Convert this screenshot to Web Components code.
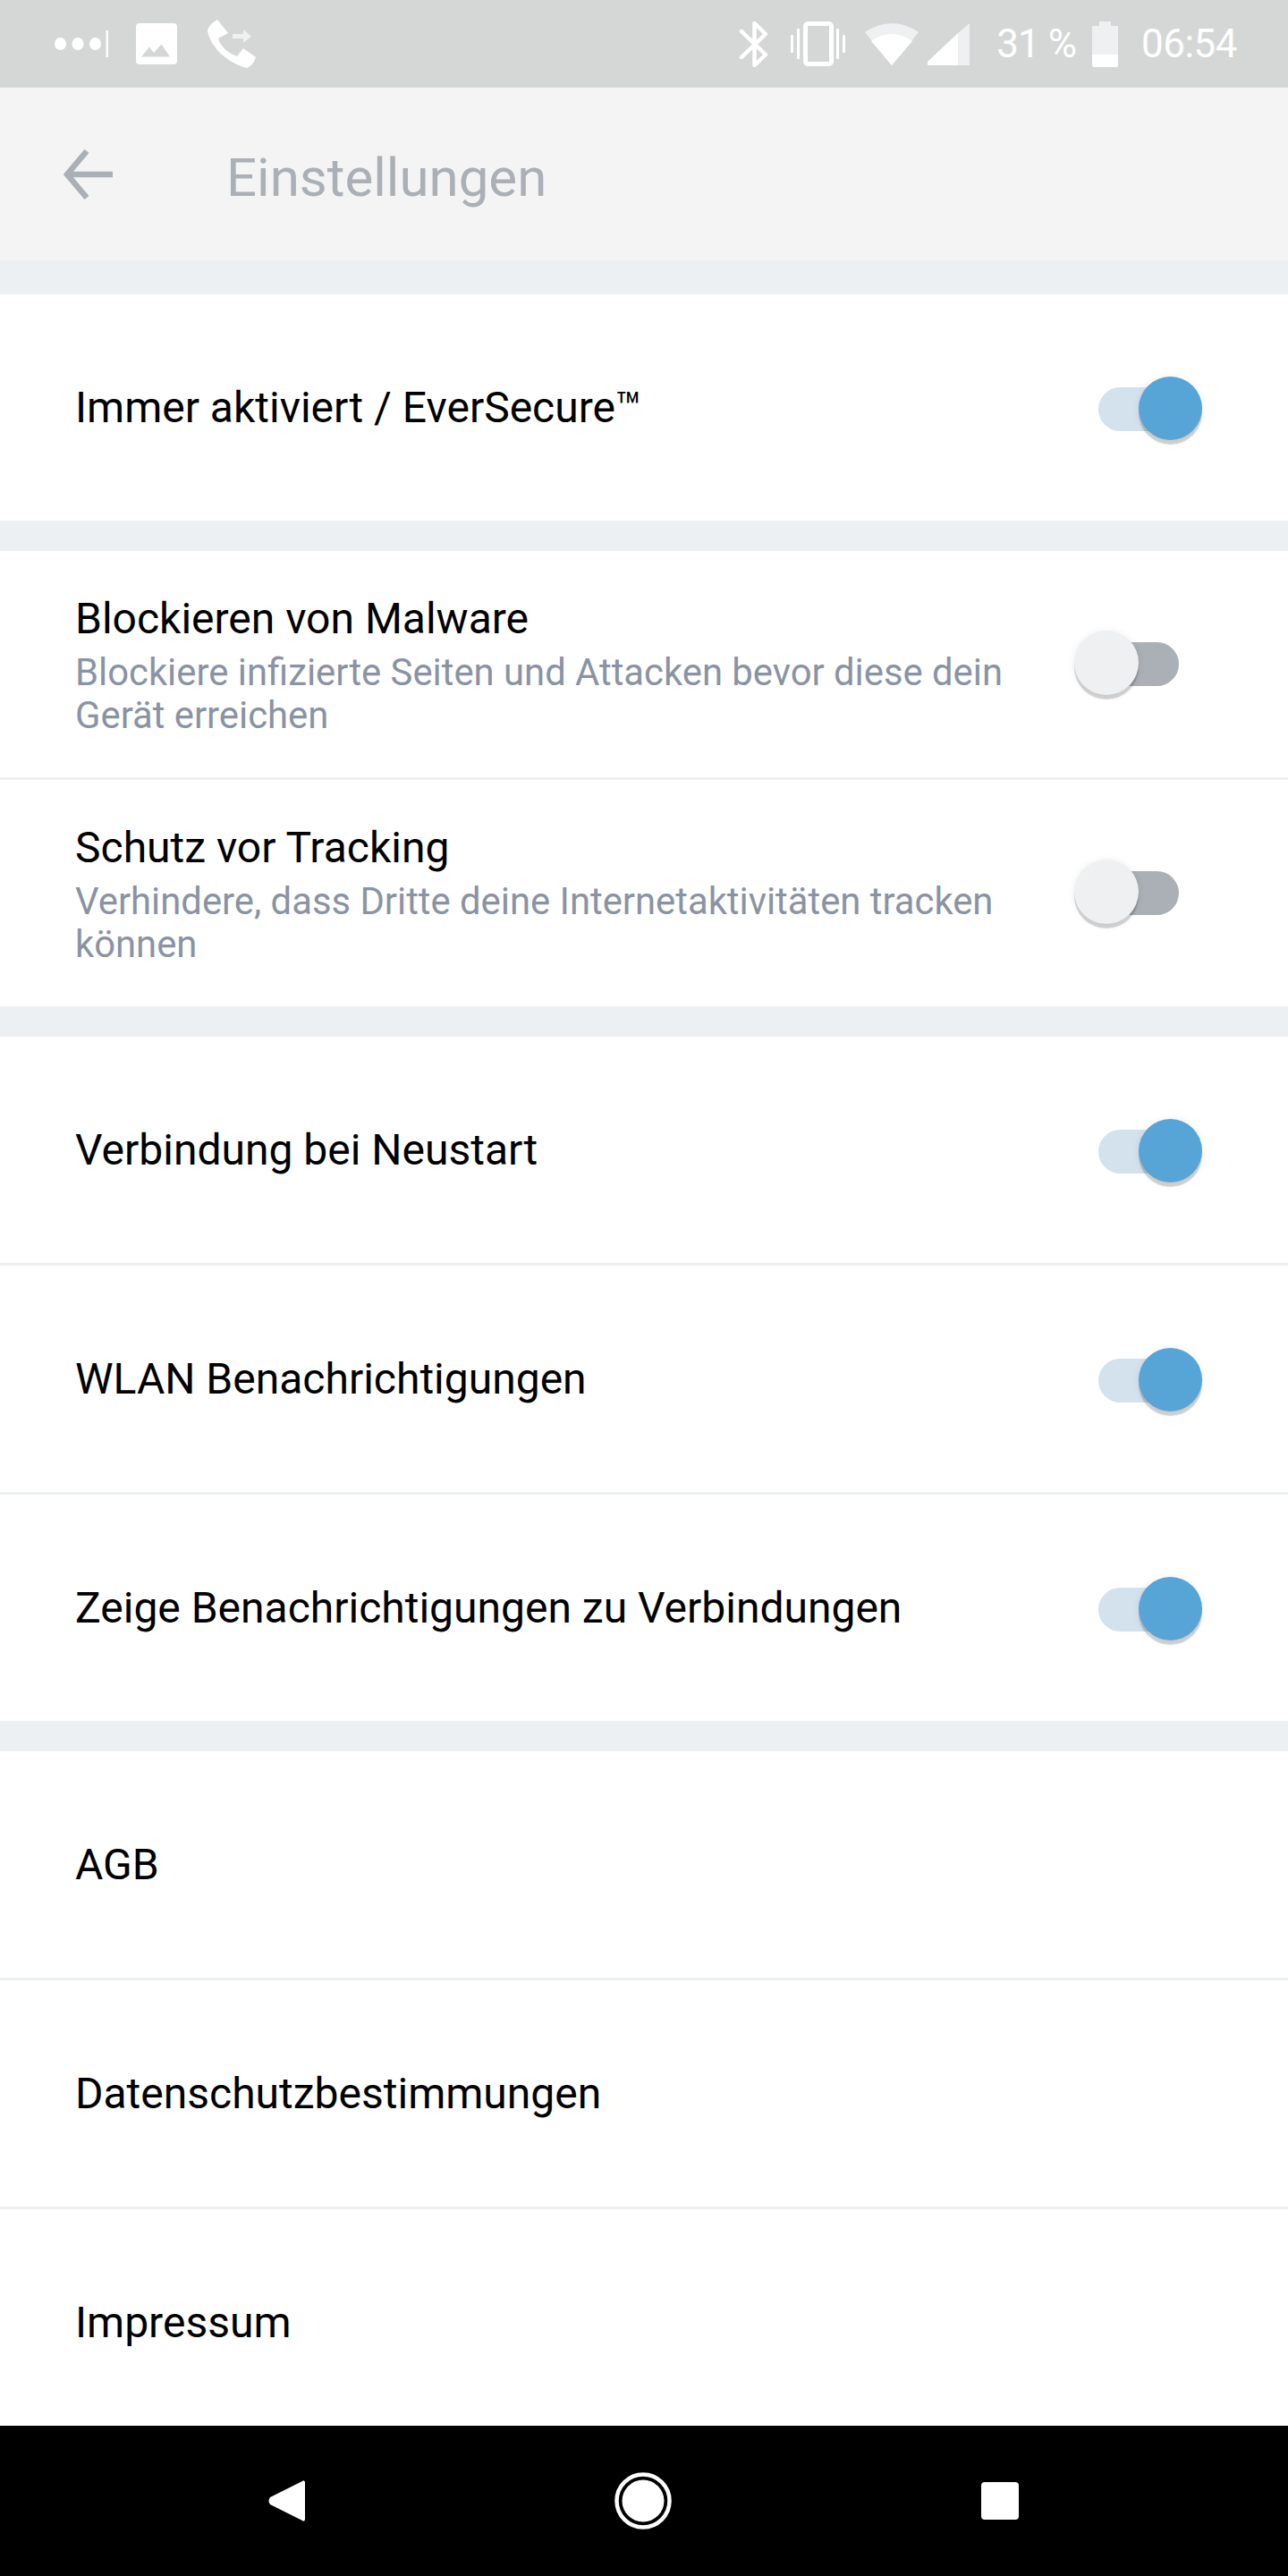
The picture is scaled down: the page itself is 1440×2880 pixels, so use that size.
<!DOCTYPE html>
<html lang="de">
<head>
<meta charset="utf-8">
<title>Einstellungen</title>
<style>
  html, body { margin: 0; padding: 0; }
  body { font-family: Roboto, "Liberation Sans", sans-serif; background: #fff; }
  #screen { display: flex; flex-direction: column; height: 2880px; overflow: hidden; }
</style>
</head>
<body>
<div id="screen">
  <status-bar></status-bar>
  <app-toolbar>Einstellungen</app-toolbar>
  <settings-list>
    <settings-section>
      <settings-row toggle="on">Immer aktiviert / EverSecure™</settings-row>
    </settings-section>
    <settings-section>
      <settings-row toggle="off">Blockieren von Malware
        <span slot="desc">Blockiere infizierte Seiten und Attacken bevor diese dein Gerät erreichen</span>
      </settings-row>
      <settings-row toggle="off">Schutz vor Tracking
        <span slot="desc">Verhindere, dass Dritte deine Internetaktivitäten tracken können</span>
      </settings-row>
    </settings-section>
    <settings-section>
      <settings-row toggle="on">Verbindung bei Neustart</settings-row>
      <settings-row toggle="on">WLAN Benachrichtigungen</settings-row>
      <settings-row toggle="on">Zeige Benachrichtigungen zu Verbindungen</settings-row>
    </settings-section>
    <settings-section>
      <settings-row>AGB</settings-row>
      <settings-row>Datenschutzbestimmungen</settings-row>
      <settings-row>Impressum</settings-row>
    </settings-section>
  </settings-list>
  <nav-bar></nav-bar>
</div>

<script>
class StatusBar extends HTMLElement {
  constructor() {
    super();
    this.shadowDOM = this.attachShadow({ mode: 'open' });
    this.shadowDOM.innerHTML = `
      <style>
        :host {
          display: flex;
          align-items: center;
          height: 98px;
          flex: none;
          padding: 0 57px 0 61px;
          background: #d5d7d6;
          color: #fff;
          font-size: 44px;
        }
        svg { display: block; flex: none; }
        .spacer { flex: 1; }
        .pct { margin-left: 30px; margin-right: 18px; letter-spacing: -1px; }
        .time { margin-left: 26px; letter-spacing: -0.5px; }
      </style>
      <svg width="60" height="30" viewBox="0 0 60 30" fill="#fff">
        <ellipse cx="6.5" cy="15" rx="6.5" ry="7"/>
        <ellipse cx="26" cy="15" rx="6.5" ry="7"/>
        <ellipse cx="45.5" cy="15" rx="6.5" ry="7"/>
        <rect x="57.5" y="0" width="2.5" height="30"/>
      </svg>
      <svg style="margin-left:31px" width="46" height="46" viewBox="0 0 46 46">
        <rect width="46" height="46" rx="4" fill="#fff"/>
        <path d="M6 37.5 L15 26.5 L20 33 L28.5 23.5 L38 37.5 Z" fill="#d5d7d6"/>
      </svg>
      <svg style="margin-left:34px" width="54" height="54" viewBox="0 0 54 54">
        <path fill="#fff" d="M11 0 L23 15 L12 21 C14 29 23 38 33 41 L40 32 L54 42 Q52 50 44 54 C20 48 2 28 0 12 Q2 5 11 0Z"/>
        <path fill="#eef0f2" d="M28 16 H40 V11 L49 18.5 L40 26 V21 H28Z"/>
      </svg>
      <div class="spacer"></div>
      <svg width="33" height="51" viewBox="0 0 33 51">
        <path fill="none" stroke="#fff" stroke-width="4.5" stroke-linejoin="round" stroke-linecap="round"
          d="M3 11 L30 37 L17.5 49 V2 L30 14 L3 40"/>
      </svg>
      <svg style="margin-left:25px" width="61" height="50" viewBox="0 0 61 50" fill="#fff">
        <rect x="16.5" y="2.5" width="29" height="45" rx="3" fill="none" stroke="#fff" stroke-width="5"/>
        <rect x="7" y="8" width="3" height="34" rx="1"/>
        <rect x="0" y="15" width="3" height="20" rx="1"/>
        <rect x="51" y="8" width="3" height="34" rx="1"/>
        <rect x="58" y="15" width="3" height="20" rx="1"/>
      </svg>
      <svg style="margin-left:22px" width="60" height="47" viewBox="0 0 60 47">
        <path fill="#eef0f2" d="M0 10 Q30 -10 60 10 L30 47Z"/>
        <path fill="#fff" d="M7 20 Q30 4 53 20 L30 47Z"/>
      </svg>
      <svg style="margin-left:10px" width="47" height="47" viewBox="0 0 47 47">
        <path fill="#eef0f2" d="M34 11 L47 0 V47 H34Z"/>
        <path fill="#fff" d="M34 11 V47 H0 V43Z"/>
      </svg>
      <span class="pct">31 %</span>
      <svg width="29" height="51" viewBox="0 0 29 51">
        <path fill="#eef0f2" d="M8 0 H21 V5 H29 V37 H0 V5 H8Z"/>
        <path fill="#fff" d="M0 37 H29 V49 Q29 51 27 51 H2 Q0 51 0 49Z"/>
      </svg>
      <span class="time">06:54</span>
    `;
  }
}

class AppToolbar extends HTMLElement {
  constructor() {
    super();
    this.shadowDOM = this.attachShadow({ mode: 'open' });
    this.shadowDOM.innerHTML = `
      <style>
        :host {
          display: flex;
          align-items: center;
          height: 193px;
          flex: none;
          padding-left: 70px;
          background: #f4f4f4;
          color: #abb0b6;
          font-size: 60px;
        }
        svg { display: block; flex: none; margin-right: 127px; }
        slot { display: block; padding-top: 7px; }
      </style>
      <svg width="56" height="56" viewBox="0 0 56 56">
        <path fill="none" stroke="#abb0b6" stroke-width="6.5" d="M56 28 H5 M27 2 L5 28 L27 54"/>
      </svg>
      <slot></slot>
    `;
  }
}

class SettingsList extends HTMLElement {
  constructor() {
    super();
    this.shadowDOM = this.attachShadow({ mode: 'open' });
    this.shadowDOM.innerHTML = `
      <style>
        :host {
          display: flex;
          flex-direction: column;
          flex: 1;
          min-height: 0;
          gap: 34px;
          padding-top: 38px;
          overflow: hidden;
          background: #edf0f2;
        }
      </style>
      <slot></slot>
    `;
  }
}

class SettingsSection extends HTMLElement {
  constructor() {
    super();
    this.shadowDOM = this.attachShadow({ mode: 'open' });
    this.shadowDOM.innerHTML = `
      <style>
        :host {
          display: flex;
          flex-direction: column;
          flex: none;
          gap: 3px;
          background: #edf0f2;
        }
      </style>
      <slot></slot>
    `;
  }
}

class SettingsRow extends HTMLElement {
  constructor() {
    super();
    this.shadowDOM = this.attachShadow({ mode: 'open' });
  }

  connectedCallback() {
    const toggle = this.getAttribute('toggle');
    const hasDesc = this.querySelector('[slot=desc]');
    this.shadowDOM.innerHTML = `
      <style>
        :host {
          display: flex;
          align-items: center;
          height: 253px;
          flex: none;
          padding: 0 95px 0 84px;
          background: #fff;
          color: #000;
        }
        .text { flex: 1; min-width: 0; font-size: 48px; line-height: 56px; }
        .text.two-line { padding-top: 3px; }
        .desc { width: 1080px; color: #8a93a3; font-size: 41.8px; line-height: 48px; }
        .two-line .desc { margin-top: 8px; }
      </style>
      <div class="text ${hasDesc ? 'two-line' : ''}">
        <slot></slot>
        <div class="desc"><slot name="desc"></slot></div>
      </div>
      ${toggle ? `<toggle-switch state="${toggle}"></toggle-switch>` : ''}
    `;
  }
}

class ToggleSwitch extends HTMLElement {
  constructor() {
    super();
    this.shadowDOM = this.attachShadow({ mode: 'open' });
  }

  connectedCallback() {
    const on = this.getAttribute('state') === 'on';
    this.shadowDOM.innerHTML = `
      <style>
        :host {
          display: flex;
          align-items: flex-start;
          justify-content: center;
          position: relative;
          flex: none;
          width: 144px;
          height: 72px;
          margin: ${on ? '3px 0 0' : '0 0 3px'};
        }
        .track {
          width: 90px;
          height: 49px;
          margin-top: ${on ? '12px' : '13px'};
          border-radius: 24.5px;
          background: ${on ? '#d3e2ec' : '#abb0b6'};
        }
        .knob {
          position: absolute;
          top: 0;
          ${on ? 'right: 1px' : 'left: 0'};
          width: ${on ? '71px' : '72px'};
          height: ${on ? '71px' : '72px'};
          border-radius: 50%;
          background: ${on ? '#57a4d7' : '#eef0f2'};
          box-shadow: 0 5px 1px rgba(0, 0, 0, 0.17), 0 1px 7px 2px rgba(0, 0, 0, 0.05);
        }
      </style>
      <div class="track"></div>
      <div class="knob"></div>
    `;
  }
}

class NavBar extends HTMLElement {
  constructor() {
    super();
    this.shadowDOM = this.attachShadow({ mode: 'open' });
    this.shadowDOM.innerHTML = `
      <style>
        :host {
          display: flex;
          align-items: center;
          justify-content: space-between;
          height: 168px;
          flex: none;
          padding: 0 301px 0 300px;
          background: #000;
        }
        svg { display: block; flex: none; }
      </style>
      <svg width="41" height="46" viewBox="0 0 41 46">
        <path fill="#fff" d="M41 2 V44 Q40 47 38 45 L2 27 Q-1 23 2 19 L38 1 Q40 -1 41 2Z"/>
      </svg>
      <svg width="64" height="64" viewBox="0 0 64 64">
        <circle cx="32" cy="32" r="29.5" fill="none" stroke="#fff" stroke-width="4.5"/>
        <circle cx="32" cy="32" r="23.5" fill="#fff"/>
      </svg>
      <svg width="42" height="42" viewBox="0 0 42 42">
        <rect width="42" height="42" rx="4" fill="#fff"/>
      </svg>
    `;
  }
}

customElements.define('status-bar', StatusBar);
customElements.define('app-toolbar', AppToolbar);
customElements.define('settings-list', SettingsList);
customElements.define('settings-section', SettingsSection);
customElements.define('settings-row', SettingsRow);
customElements.define('toggle-switch', ToggleSwitch);
customElements.define('nav-bar', NavBar);
</script>
</body>
</html>
